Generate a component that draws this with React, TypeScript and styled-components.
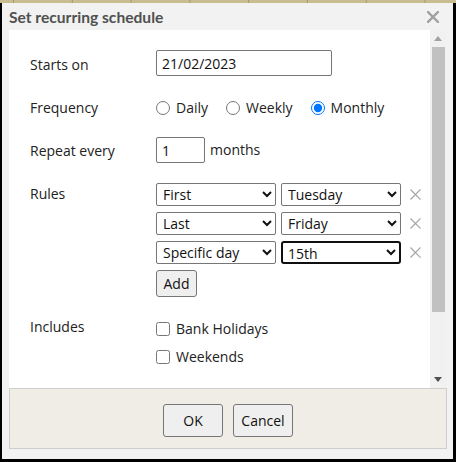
import React, { useState } from "react";
import styled, { createGlobalStyle } from "styled-components";

const GlobalStyle = createGlobalStyle`
  html, body { margin: 0; padding: 0; background: #000; }
  body { font-family: "Open Sans", "Noto Sans", sans-serif; font-size: 14px; color: #222; }
`;

const Screen = styled.div`
  width: 456px;
  height: 462px;
  display: flex;
  flex-direction: column;
  background: #000;
  overflow: hidden;
`;

// bit of the grid behind the dialog
const TopStrip = styled.div`
  height: 3px;
  flex: none;
  background-color: #c8bd8e;
  background-image: linear-gradient(to right, #a3996c 0 1px, transparent 1px);
  background-size: 58.8px 100%;
  background-position: 13px 0;
`;

const Dialog = styled.div`
  flex: 1;
  margin: 0 3px 3px 2px;
  background: #f2f2f2;
  display: flex;
  flex-direction: column;
  padding-bottom: 10px;
`;

const TitleBar = styled.div`
  height: 27px;
  flex: none;
  display: flex;
  align-items: center;
  justify-content: space-between;
  padding: 1px 14px 0 7px;
  box-sizing: border-box;
`;

const Title = styled.div`
  font-family: Lato, "Open Sans", sans-serif;
  font-weight: 700;
  font-size: 15.6px;
  color: #505050;
`;

const CloseButton = styled.button`
  border: 0;
  background: none;
  padding: 0;
  width: 12px;
  height: 12px;
  display: flex;
  cursor: pointer;
`;

const Main = styled.div`
  flex: none;
  height: 358px;
  margin: 0 7px;
  display: flex;
`;

const Body = styled.div`
  flex: 1;
  background: #fff;
  padding: 20px 0 0 21px;
  overflow: hidden;
`;

const ScrollTrack = styled.div`
  width: 16px;
  flex: none;
  background: #f1f1f1;
  display: flex;
  flex-direction: column;
  align-items: center;
`;

const ScrollArrow = styled.div`
  height: 17px;
  width: 100%;
  display: flex;
  align-items: center;
  justify-content: center;
`;

const Thumb = styled.div`
  width: 13px;
  height: 265px;
  background: #c1c1c1;
`;

const Spacer = styled.div`
  flex: 1;
`;

const Field = styled.div<{ $top: number }>`
  display: grid;
  grid-template-columns: 126px 1fr;
  align-items: start;
  margin-top: ${(p) => p.$top}px;
`;

const Label = styled.div<{ $pad: number }>`
  line-height: 20px;
  padding-top: ${(p) => p.$pad}px;
  color: #222;
`;

const TextInput = styled.input<{ $w: number }>`
  width: ${(p) => p.$w}px;
  height: 26px;
  box-sizing: border-box;
  border: 1px solid #767676;
  border-radius: 2px;
  padding: 0 5px;
  font: inherit;
  font-size: 14px;
  color: #111;
  margin: 0;
`;

const Inline = styled.div<{ $gap: number }>`
  display: flex;
  align-items: center;
  gap: ${(p) => p.$gap}px;
  line-height: 20px;
`;

const Choice = styled.label`
  display: flex;
  align-items: center;
  gap: 6px;
  font-size: 14px;
  cursor: pointer;

  input {
    margin: 0;
    width: 14px;
    height: 14px;
  }
`;

const RuleList = styled.div`
  display: flex;
  flex-direction: column;
  gap: 6px;
  align-items: flex-start;
`;

const RuleRow = styled.div`
  display: flex;
  align-items: center;
  gap: 5px;
`;

const Select = styled.select`
  width: 120px;
  height: 23px;
  box-sizing: border-box;
  border: 1px solid #767676;
  border-radius: 2px;
  background: #fff;
  font: inherit;
  font-size: 14px;
  color: #111;
  padding: 0 2px;
  margin: 0;

  &:focus, &.focused {
    outline: none;
    border: 2px solid #101010;
    border-radius: 3px;
    padding: 0 1px;
  }
`;

const RemoveButton = styled.button`
  border: 0;
  background: none;
  padding: 0;
  margin-left: 4px;
  width: 11px;
  height: 11px;
  display: flex;
  cursor: pointer;
`;

const Button = styled.button<{ $w: number; $h: number }>`
  width: ${(p) => p.$w}px;
  height: ${(p) => p.$h}px;
  background: #efefef;
  border: 1px solid #767676;
  border-radius: 3px;
  font: inherit;
  font-size: 14px;
  color: #111;
  padding: 0;
  cursor: pointer;
`;

const CheckList = styled.div`
  display: flex;
  flex-direction: column;
  gap: 9px;
  padding-top: 2px;
`;

const Footer = styled.div`
  flex: none;
  height: 61px;
  box-sizing: border-box;
  margin: 0 6px 0 7px;
  background: #f0ede7;
  border: 1px solid #cfcfcf;
  display: flex;
  align-items: center;
  justify-content: center;
  gap: 10px;
  padding-top: 3px;
`;

const Cross = ({ color, w }: { color: string; w: number }) => (
  <svg width="100%" height="100%" viewBox="0 0 12 12">
    <path d="M1 1 L11 11 M11 1 L1 11" stroke={color} strokeWidth={w} strokeLinecap="square" />
  </svg>
);

const ordinals = ["First", "Second", "Third", "Fourth", "Last", "Specific day"];
const days = ["Monday", "Tuesday", "Wednesday", "Thursday", "Friday", "Saturday", "Sunday", "15th"];

export default function App() {
  const [freq, setFreq] = useState("monthly");
  const [rules, setRules] = useState([
    { which: "First", day: "Tuesday" },
    { which: "Last", day: "Friday" },
    { which: "Specific day", day: "15th" },
  ]);

  return (
    <>
      <GlobalStyle />
      <Screen>
        <TopStrip />
        <Dialog>
          <TitleBar>
            <Title>Set recurring schedule</Title>
            <CloseButton aria-label="Close">
              <Cross color="#a0a0a0" w={2.4} />
            </CloseButton>
          </TitleBar>
          <Main>
            <Body>
              <Field $top={0}>
                <Label $pad={5}>Starts on</Label>
                <TextInput $w={176} defaultValue="21/02/2023" />
              </Field>
              <Field $top={22}>
                <Label $pad={0}>Frequency</Label>
                <Inline $gap={18}>
                  {["Daily", "Weekly", "Monthly"].map((f) => (
                    <Choice key={f}>
                      <input
                        type="radio"
                        name="freq"
                        checked={freq === f.toLowerCase()}
                        onChange={() => setFreq(f.toLowerCase())}
                      />
                      {f}
                    </Choice>
                  ))}
                </Inline>
              </Field>
              <Field $top={19}>
                <Label $pad={4}>Repeat every</Label>
                <Inline $gap={5}>
                  <TextInput $w={49} defaultValue="1" />
                  <span>months</span>
                </Inline>
              </Field>
              <Field $top={20}>
                <Label $pad={1}>Rules</Label>
                <RuleList>
                  {rules.map((r, i) => (
                    <RuleRow key={i}>
                      <Select defaultValue={r.which}>
                        {ordinals.map((o) => <option key={o}>{o}</option>)}
                      </Select>
                      <Select defaultValue={r.day} className={i === 2 ? "focused" : undefined}>
                        {days.map((d) => <option key={d}>{d}</option>)}
                      </Select>
                      <RemoveButton
                        aria-label="Remove rule"
                        onClick={() => setRules(rules.filter((_, j) => j !== i))}
                      >
                        <Cross color="#a6a6a6" w={1.4} />
                      </RemoveButton>
                    </RuleRow>
                  ))}
                  <Button $w={41} $h={27} onClick={() => setRules([...rules, { which: "First", day: "Monday" }])}>
                    Add
                  </Button>
                </RuleList>
              </Field>
              <Field $top={20}>
                <Label $pad={0}>Includes</Label>
                <CheckList>
                  <Choice><input type="checkbox" />Bank Holidays</Choice>
                  <Choice><input type="checkbox" />Weekends</Choice>
                </CheckList>
              </Field>
            </Body>
            <ScrollTrack>
              <ScrollArrow>
                <svg width="8" height="5" viewBox="0 0 8 5"><path d="M0 5 L4 0 L8 5 Z" fill="#a3a3a3" /></svg>
              </ScrollArrow>
              <Thumb />
              <Spacer />
              <ScrollArrow>
                <svg width="8" height="5" viewBox="0 0 8 5"><path d="M0 0 L8 0 L4 5 Z" fill="#505050" /></svg>
              </ScrollArrow>
            </ScrollTrack>
          </Main>
          <Footer>
            <Button $w={60} $h={33}>OK</Button>
            <Button $w={60} $h={33}>Cancel</Button>
          </Footer>
        </Dialog>
      </Screen>
    </>
  );
}
